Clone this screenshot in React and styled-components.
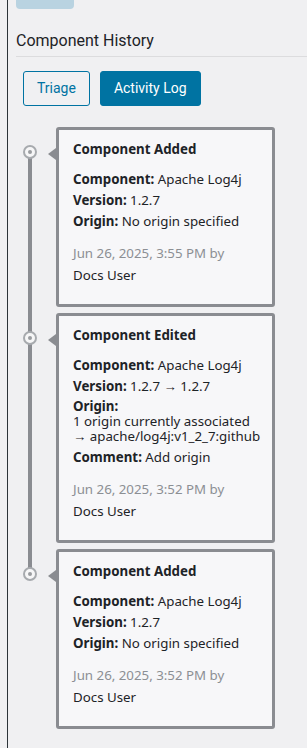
import React from "react";
import styled, { createGlobalStyle } from "styled-components";

const GlobalStyle = createGlobalStyle`
  html, body { margin: 0; padding: 0; background: #f0f0f2; }
  body {
    font-family: Roboto, "Liberation Sans", sans-serif;
    color: #1d2327;
    -webkit-font-smoothing: antialiased;
  }
  * { box-sizing: border-box; }
`;

const Panel = styled.div`
  margin-left: 7px;
  min-height: 748px;
  border-left: 1px solid #2c3338;
  padding-left: 8px;
  display: flex;
  flex-direction: column;
`;

const TopTab = styled.div`
  width: 58px;
  height: 9px;
  background: #b9d3e1;
  border-radius: 0 0 4px 4px;
`;

const Heading = styled.h2`
  margin: 21px 0 0;
  padding-bottom: 4px;
  font-size: 16px;
  line-height: 22px;
  font-weight: 400;
  color: #1d2327;
  border-bottom: 1px solid #dcdcde;
`;

const Tabs = styled.div`
  display: flex;
  gap: 10px;
  margin-top: 14px;
  padding-left: 7px;
`;

const TabButton = styled.button`
  height: 35px;
  padding: 0 13px;
  font-family: inherit;
  font-size: 14px;
  line-height: 33px;
  border-radius: 3px;
  border: 1px solid #0073a2;
  background: ${(p) => (p.$active ? "#0073a2" : "transparent")};
  color: ${(p) => (p.$active ? "#ffffff" : "#0073a2")};
  cursor: pointer;
`;

const Timeline = styled.div`
  display: flex;
  flex-direction: column;
  gap: 6px;
  margin-top: 21px;
`;

const Entry = styled.div`
  position: relative;
  display: grid;
  grid-template-columns: 40px 219px;
  align-items: start;

  &:not(:last-child)::before {
    content: "";
    position: absolute;
    left: 12px;
    width: 4px;
    top: 25px;
    bottom: -31px;
    background: #8a8c91;
  }
`;

const Marker = styled.span`
  position: relative;
  z-index: 1;
  margin: 18px 0 0 7px;
  width: 14px;
  height: 14px;
  border-radius: 50%;
  border: 2px solid #a7aaae;
  background: #f6f6f7;
  display: flex;
  align-items: center;
  justify-content: center;

  &::after {
    content: "";
    width: 4px;
    height: 4px;
    border-radius: 50%;
    background: #9a9ca0;
  }
`;

const Card = styled.div`
  position: relative;
  border: 3px solid #8a8c91;
  border-radius: 3px;
  background: #f7f7f9;
  padding: 9px 14px 18px;
  font-family: "Noto Sans", Roboto, sans-serif;
  font-size: 13.3px;
  line-height: 21px;

  &::before {
    content: "";
    position: absolute;
    left: -11px;
    top: 18px;
    border-right: 8px solid #8a8c91;
    border-top: 6px solid transparent;
    border-bottom: 6px solid transparent;
  }
`;

const Title = styled.div`
  font-weight: 700;
  margin-bottom: 9px;
`;

const Field = styled.div`
  line-height: ${(p) => (p.$compact ? "15px" : "21px")};
  padding: ${(p) => (p.$compact ? "2px 0 3px" : "0")};
  white-space: ${(p) => (p.$compact ? "pre" : "normal")};
`;

const Label = styled.b`
  font-weight: 700;
`;

const Meta = styled.div`
  margin-top: 10px;
  line-height: 22px;
`;

const When = styled.div`
  color: #8c8f94;
`;

const entries = [
  {
    title: "Component Added",
    fields: [
      ["Component", "Apache Log4j"],
      ["Version", "1.2.7"],
      ["Origin", "No origin specified"],
    ],
    when: "Jun 26, 2025, 3:55 PM by",
  },
  {
    title: "Component Edited",
    fields: [
      ["Component", "Apache Log4j"],
      ["Version", "1.2.7 → 1.2.7"],
      ["Origin", "\n1 origin currently associated\n→ apache/log4j:v1_2_7:github", true],
      ["Comment", "Add origin"],
    ],
    when: "Jun 26, 2025, 3:52 PM by",
  },
  {
    title: "Component Added",
    fields: [
      ["Component", "Apache Log4j"],
      ["Version", "1.2.7"],
      ["Origin", "No origin specified"],
    ],
    when: "Jun 26, 2025, 3:52 PM by",
  },
];

export default function App() {
  return (
    <>
      <GlobalStyle />
      <Panel>
        <TopTab />
        <Heading>Component History</Heading>
        <Tabs>
          <TabButton>Triage</TabButton>
          <TabButton $active>Activity Log</TabButton>
        </Tabs>
        <Timeline>
          {entries.map((e, i) => (
            <Entry key={i}>
              <Marker />
              <Card>
                <Title>{e.title}</Title>
                {e.fields.map(([k, v, compact]) => (
                  <Field key={k} $compact={compact}>
                    <Label>{k}:</Label>
                    {compact ? v : " " + v}
                  </Field>
                ))}
                <Meta>
                  <When>{e.when}</When>
                  <div>Docs User</div>
                </Meta>
              </Card>
            </Entry>
          ))}
        </Timeline>
      </Panel>
    </>
  );
}
